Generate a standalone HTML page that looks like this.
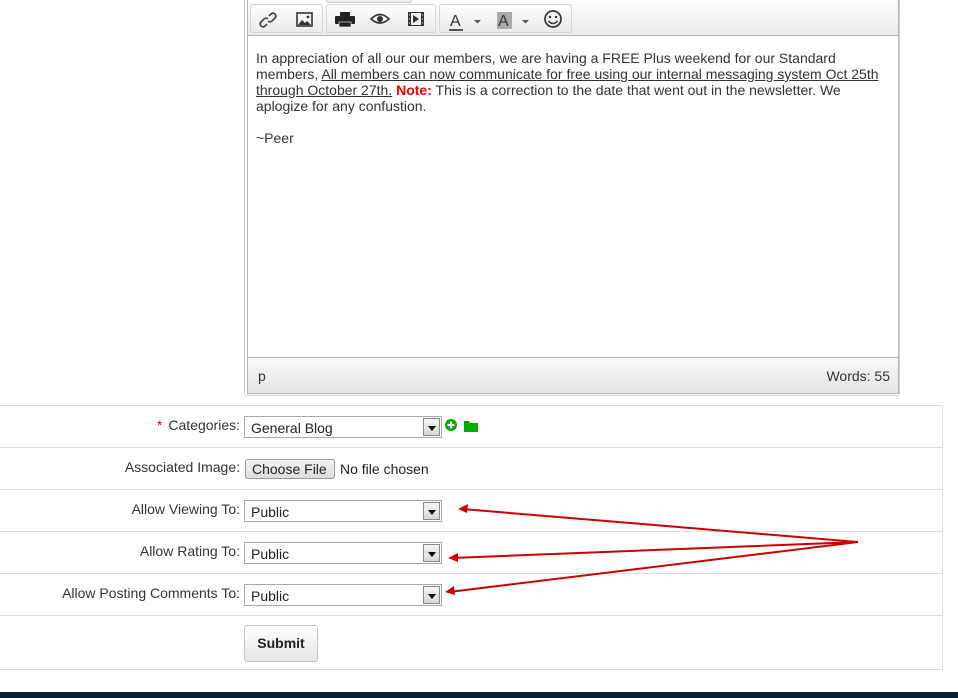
<!DOCTYPE html>
<html><head><style>
*{margin:0;padding:0;box-sizing:border-box}
body{width:958px;height:698px;background:#fff;position:relative;overflow:hidden;font-family:"Liberation Sans",Arial,sans-serif;font-size:14px;color:#333}
.abs{position:absolute}
.ed{left:244px;top:-4px;width:656px;height:400px;border:1px solid #d4d4d4;border-radius:3px}
.edi{left:247px;top:0;width:652px;height:394px;border:1px solid #b4b4b4;border-top:none}
.tb{left:248px;top:0;width:650px;height:36px;background:linear-gradient(#fdfdfd,#ececec);border-bottom:1px solid #b4b4b4}
.grp{position:absolute;top:4px;height:29px;border:1px solid #d6d6d6;border-radius:3px;background:linear-gradient(#fff,#eaeaea)}
.content{left:256px;top:50px;width:636px;font-size:14px;line-height:16px;color:#333}
.st{left:248px;top:357px;width:650px;height:36px;background:linear-gradient(#f8f8f8,#e4e4e4);border-top:1px solid #b4b4b4}
.hr{position:absolute;left:0;width:942px;height:1px;background:#ddd}
.lbl{position:absolute;right:718px;text-align:right;font-size:14px;color:#333}
.sel{position:absolute;left:244px;width:198px;height:22px;border:1px solid #a9a9a9;background:#fff;font-size:14px;padding:3px 0 0 6px;color:#222}
.sel i{position:absolute;right:1px;top:1px;width:17px;height:18px;border:1px solid #888;background:linear-gradient(#f4f4f4,#d8d8d8)}
.sel i:after{content:"";position:absolute;left:4px;top:7px;border:4px solid transparent;border-top:5px solid #000}
</style></head><body>
<div class="abs ed"></div>
<div class="abs edi"></div>
<div class="abs tb">
 <div class="grp" style="left:2px;width:73px"></div>
 <div class="grp" style="left:78px;width:110px"></div>
 <div class="grp" style="left:191px;width:133px"></div>
 <div class="abs" style="left:78px;top:-3px;width:86px;height:6px;border:1px solid #ccc;border-top:none;border-radius:0 0 3px 3px;background:#eee"></div>
 <svg class="abs" style="left:0;top:1px" width="340" height="35">
  <g fill="none" stroke="#444" stroke-width="1.7"><path d="M19 23l-2.5 2.5a3 3 0 0 1-4-4l3.5-3.5a3 3 0 0 1 4 0M21 15l2.5-2.5a3 3 0 0 1 4 4l-3.5 3.5a3 3 0 0 1-4 0"/></g>
  <rect x="49" y="12" width="15" height="13" fill="none" stroke="#333" stroke-width="1.6"/><path d="M50 24l4-5 3 3 2-2 4 4z" fill="#333"/><circle cx="60" cy="16" r="1.4" fill="#333"/>
  <rect x="92" y="11" width="10" height="4" fill="#222"/><rect x="87" y="15" width="20" height="8" rx="1" fill="#222"/><rect x="91" y="21" width="12" height="5" fill="#222" stroke="#fff" stroke-width=".6"/>
  <path d="M123 18q9-9 18 0q-9 8-18 0z" fill="none" stroke="#333" stroke-width="1.6"/><circle cx="132" cy="18" r="3" fill="#333"/>
  <rect x="160" y="11" width="16" height="14" fill="#333"/><rect x="163" y="12" width="10" height="12" fill="#eee"/><path d="M165 14l6 4-6 4z" fill="#333"/><path d="M161 14h1M161 18h1M161 22h1M174 14h1M174 18h1M174 22h1" stroke="#eee"/>
  <text x="202" y="25" font-family="Liberation Sans" font-size="16" fill="#333">A</text><rect x="201" y="28" width="14" height="2" fill="#555"/><path d="M226 19h7l-3.5 3.5z" fill="#555"/>
  <rect x="249" y="11" width="15" height="17" fill="#aaa"/><text x="250" y="25" font-family="Liberation Sans" font-size="16" fill="#333">A</text><path d="M274 19h7l-3.5 3.5z" fill="#555"/>
  <circle cx="305" cy="18" r="8" fill="none" stroke="#333" stroke-width="1.7"/><circle cx="302" cy="16" r="1.2" fill="#333"/><circle cx="308" cy="16" r="1.2" fill="#333"/><path d="M300.5 20q4.5 5 9 0" fill="none" stroke="#333" stroke-width="1.5"/>
 </svg>
</div>
<div class="abs content">In appreciation of all our our members, we are having a FREE Plus weekend for our Standard members, <u>All members can now communicate for free using our internal messaging system Oct 25th through October 27th.</u> <b style="color:#e00">Note:</b> This is a correction to the date that went out in the newsletter. We aplogize for any confustion.<br><br>~Peer</div>
<div class="abs st"><span class="abs" style="left:10px;top:10px">p</span><span class="abs" style="right:8px;top:10px">Words: 55</span></div>
<div class="abs" style="left:942px;top:405px;width:1px;height:265px;background:#ddd"></div>
<div class="hr" style="top:405px"></div>
<div class="hr" style="top:447px"></div>
<div class="hr" style="top:489px"></div>
<div class="hr" style="top:531px"></div>
<div class="hr" style="top:573px"></div>
<div class="hr" style="top:615px"></div>
<div class="hr" style="top:669px"></div>
<div class="lbl" style="top:417px"><span style="color:#e00;margin-right:6px">*</span>Categories:</div>
<div class="sel" style="top:416px">General Blog<i></i></div>
<svg class="abs" style="left:444px;top:418px" width="40" height="16"><circle cx="7" cy="7" r="6" fill="#0a0"/><path d="M7 3.5v7M3.5 7h7" stroke="#fff" stroke-width="2.2"/><path d="M20 3h5l1 2h8v9h-14z" fill="#0a0"/></svg>
<div class="lbl" style="top:459px">Associated Image:</div>
<div class="abs" style="left:245px;top:459px;width:90px;height:20px;border:1px solid #999;border-radius:3px;background:linear-gradient(#f4f4f4,#dcdcdc);font-size:14px;padding:1px 0 0 6px;color:#222">Choose File</div>
<div class="abs" style="left:340px;top:461px;color:#222">No file chosen</div>
<div class="lbl" style="top:501px">Allow Viewing To:</div>
<div class="sel" style="top:500px">Public<i></i></div>
<div class="lbl" style="top:543px">Allow Rating To:</div>
<div class="sel" style="top:542px">Public<i></i></div>
<div class="lbl" style="top:585px">Allow Posting Comments To:</div>
<div class="sel" style="top:584px">Public<i></i></div>
<div class="abs" style="left:244px;top:625px;width:74px;height:37px;border:1px solid #c4c4c4;border-radius:3px;background:linear-gradient(#fff,#e6e6e6);font-weight:bold;font-size:14px;color:#222;text-align:center;line-height:35px">Submit</div>
<svg class="abs" style="left:0;top:0" width="958" height="698">
 <g stroke="#c00" stroke-width="2" fill="none"><path d="M858 542L462 509M858 542L452 558M858 542L449 592"/></g>
 <g fill="#c00"><path d="M458 509l10-5-1 9z"/><path d="M448 558l10-5 0 9z"/><path d="M445 592l9-6 1 9z"/></g>
</svg>
<div class="abs" style="left:0;top:692px;width:958px;height:6px;background:#0b1e33"></div>
</body></html>
